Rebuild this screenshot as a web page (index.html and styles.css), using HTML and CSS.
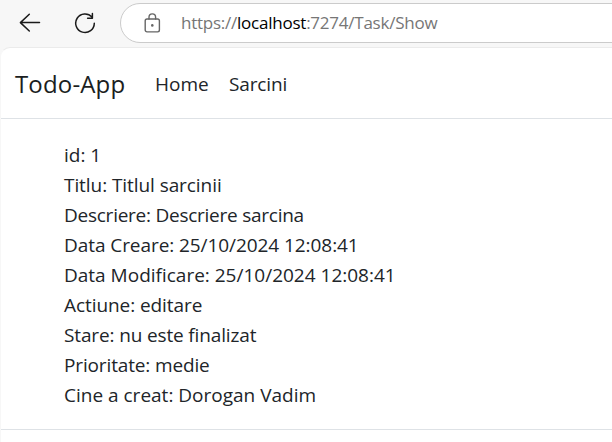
FILE: index.html
```html
<!DOCTYPE html>
<html lang="ro">
<head>
<meta charset="utf-8">
<title>Todo-App</title>
<link rel="stylesheet" href="styles.css">
</head>
<body>
<div class="toolbar">
  <svg class="back" width="22" height="20" viewBox="0 0 22 20"><path d="M20.5 9.6H1.5M10.3 1.2 1.4 9.6 10.3 18"/></svg>
  <svg class="reload" width="22" height="22" viewBox="0 0 22 22"><path d="M18 5.1A9.3 9.3 0 1 0 20.3 11.2M18.4 1.5V6.2H13.6"/></svg>
  <div class="address">
    <svg class="lock" width="17" height="21" viewBox="0 0 17 21"><rect x="1.2" y="6" width="14.2" height="12.9" rx="1.8"/><path d="M5 6V4.2a3.3 3.3 0 0 1 6.6 0V6"/><circle cx="8.3" cy="12.4" r="1.3"/></svg>
    <span class="url">https://<b>localhost</b>:7274/Task/Show</span>
  </div>
</div>
<div class="page">
  <nav class="navbar">
    <a class="brand">Todo-App</a>
    <a class="home">Home</a>
    <a class="tasks">Sarcini</a>
  </nav>
  <main class="details">
    <div>id: 1</div>
    <div class="snug">Titlu: Titlul sarcinii</div>
    <div class="tightest">Descriere: Descriere sarcina</div>
    <div class="snug">Data Creare: 25/10/2024 12:08:41</div>
    <div>Data Modificare: 25/10/2024 12:08:41</div>
    <div class="snug">Actiune: editare</div>
    <div class="tight">Stare: nu este finalizat</div>
    <div class="tight">Prioritate: medie</div>
    <div>Cine a creat: Dorogan Vadim</div>
  </main>
</div>
</body>
</html>
```
FILE: styles.css
```css
* { box-sizing: border-box; }
body {
  margin: 0;
  height: 442px;
  overflow: hidden;
  background: #f7f7f7;
  color: #212529;
  font-family: "Segoe UI", "Open Sans", "Noto Sans", sans-serif;
  font-size: 19px;
}
.toolbar {
  display: flex;
  align-items: flex-start;
  height: 47px;
}
svg {
  flex: none;
  fill: none;
  stroke: #1b1b1b;
  stroke-width: 1.5;
  stroke-linecap: round;
  stroke-linejoin: round;
}
.back { margin: 13px 0 0 19px; }
.reload { margin: 12px 0 0 33px; }
.address {
  display: flex;
  align-items: center;
  flex: 1;
  height: 40px;
  margin: 3px -30px 0 24px;
  padding-left: 23px;
  background: #fff;
  border: 1px solid #cbcbcb;
  border-radius: 20px;
}
.lock { stroke: #666; stroke-width: 1.4; margin-top: 1px; }
.lock circle { fill: #666; stroke: none; }
.url {
  margin: -2px 0 0 20px;
  color: #767676;
  font-size: 17px;
  letter-spacing: -0.24px;
  white-space: nowrap;
}
.url b { font-weight: 400; color: #000; }
.page {
  height: 395px;
  background: #fff;
  border-top: 1px solid #ebebeb;
  border-left: 1px solid #f7f7f7;
  border-top-left-radius: 10px;
}
.navbar {
  display: flex;
  align-items: center;
  height: 71px;
  padding-left: 14px;
  border-bottom: 1px solid #dee2e6;
  white-space: nowrap;
}
.brand { width: 140px; font-size: 24px; letter-spacing: 0.15px; color: #1b1e21; }
.home { width: 74px; padding-top: 1px; }
.tasks { padding-top: 1px; letter-spacing: -0.15px; }
.details {
  height: 311px;
  padding: 21px 0 0 63px;
  border-bottom: 1px solid #dee2e6;
  line-height: 30px;
  white-space: nowrap;
}
.snug { letter-spacing: -0.07px; }
.tight { letter-spacing: -0.14px; }
.tightest { letter-spacing: -0.25px; }
```
